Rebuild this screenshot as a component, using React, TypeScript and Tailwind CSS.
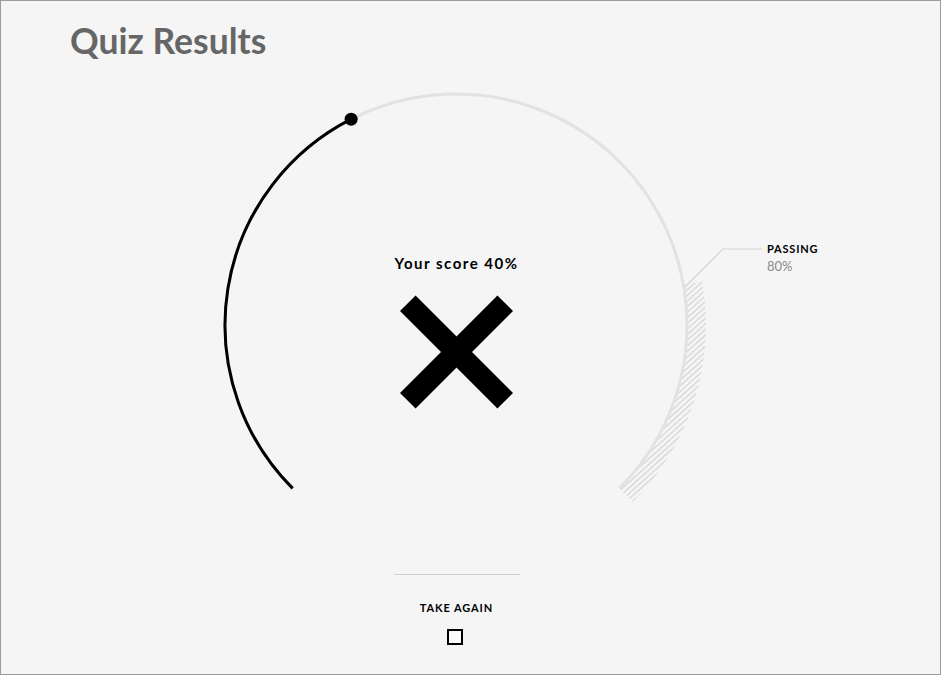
import React from "react";

// Gauge geometry (page coordinates)
const CX = 456;
const CY = 325;
const R = 231;

const pt = (deg: number, r: number = R) => {
  const a = (deg * Math.PI) / 180;
  return [CX + r * Math.cos(a), CY + r * Math.sin(a)];
};

const START = 135; // 0%
const SPAN = 270;
const score = 0.4;
const passing = 0.8;

const f = (n: number) => n.toFixed(2);

function Gauge() {
  const [sx, sy] = pt(START);
  const [ex, ey] = pt(START + SPAN);
  const [scx, scy] = pt(START + SPAN * score);
  const passDeg = START + SPAN * passing;

  const rIn = R + 1.5;
  const rOut = 250;
  const [o1x, o1y] = pt(passDeg - 1, rOut);
  const [o2x, o2y] = pt(START + SPAN, rOut);
  const [i2x, i2y] = pt(START + SPAN, rIn);
  const [i1x, i1y] = pt(passDeg - 1, rIn);

  // diagonal hatch strokes for the passing zone
  const hatch: React.ReactNode[] = [];
  const slope = Math.tan((42 * Math.PI) / 180);
  for (let i = 0; i < 60; i++) {
    const y0 = 270 + i * 5.6;
    const x0 = 560;
    const x1 = 740;
    const y1 = y0 - (x1 - x0) * slope;
    hatch.push(
      <line key={i} x1={x0} y1={y0} x2={x1} y2={y1} stroke="#d8d8d8" strokeWidth={1.4} />
    );
  }

  return (
    <svg
      width={911}
      height={440}
      viewBox="1 80 911 440"
      className="col-start-1 row-start-1 block"
    >
      <defs>
        <clipPath id="pass-zone">
          <path
            d={`M ${f(o1x)} ${f(o1y)} A ${rOut} ${rOut} 0 0 1 ${f(o2x)} ${f(o2y)} L ${f(i2x)} ${f(i2y)} A ${rIn} ${rIn} 0 0 0 ${f(i1x)} ${f(i1y)} Z`}
          />
        </clipPath>
      </defs>

      {/* track */}
      <path
        d={`M ${f(sx)} ${f(sy)} A ${R} ${R} 0 1 1 ${f(ex)} ${f(ey)}`}
        fill="none"
        stroke="#e2e2e2"
        strokeWidth={3}
      />

      {/* passing zone hatch */}
      <g clipPath="url(#pass-zone)">{hatch}</g>

      {/* passing leader */}
      <polyline
        points="685,287 723,249 762,249"
        fill="none"
        stroke="#d4d4d4"
        strokeWidth={1.2}
      />

      {/* score arc */}
      <path
        d={`M ${f(sx)} ${f(sy)} A ${R} ${R} 0 0 1 ${f(scx)} ${f(scy)}`}
        fill="none"
        stroke="#000"
        strokeWidth={3}
      />
      <circle cx={scx} cy={scy} r={6.5} fill="#000" />

      {/* failed mark */}
      <g stroke="#000" strokeWidth={22} strokeLinecap="butt">
        <line x1={407.8} y1={303.3} x2={505.2} y2={400.7} />
        <line x1={505.2} y1={303.3} x2={407.8} y2={400.7} />
      </g>
    </svg>
  );
}

export default function App() {
  return (
    <div
      className="w-[941px] h-[675px] overflow-hidden border border-[#9c9c9c] bg-[#f5f5f5] flex flex-col"
      style={{ fontFamily: "Lato, 'Open Sans', sans-serif" }}
    >
      <header className="h-[79px] pl-[69px] pt-[20px]">
        <h1 className="text-[35.5px] leading-[40px] font-bold text-[#666666]">Quiz Results</h1>
      </header>

      <section className="w-[911px] h-[440px] grid">
        <Gauge />
        <div className="col-start-1 row-start-1 flex flex-col items-center pt-[176px]">
          <p className="text-[15px] leading-[15px] font-bold tracking-[1.5px] text-black">
            Your score 40%
          </p>
        </div>
        <div className="col-start-1 row-start-1 pl-[766px] pt-[163px]">
          <p className="text-[11px] leading-[12px] font-bold tracking-[0.8px] text-black">PASSING</p>
          <p className="mt-[5px] text-[13px] leading-[13px] text-[#8a8a8a]">80%</p>
        </div>
      </section>

      <footer className="w-[911px] flex flex-col items-center pt-[54px]">
        <div className="w-[126px] h-px bg-[#cfcfcf]" />
        <button className="mt-[27px] text-[11px] leading-[12px] font-bold tracking-[0.9px] text-black">
          TAKE AGAIN
        </button>
        <span className="mt-[15px] mr-[4px] block w-[16px] h-[16px] border-2 border-black bg-[#fbfbfb]" />
      </footer>
    </div>
  );
}
